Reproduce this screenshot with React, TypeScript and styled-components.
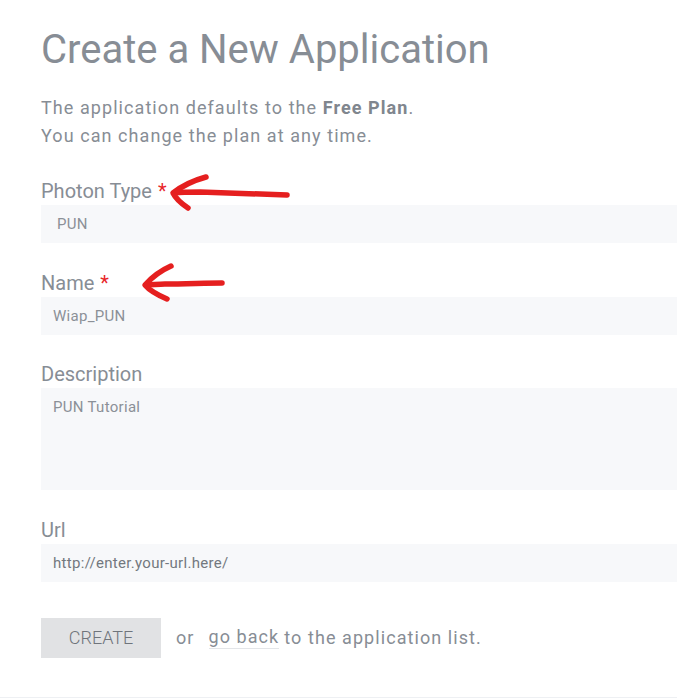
import React from "react";
import styled, { createGlobalStyle } from "styled-components";

const GlobalStyle = createGlobalStyle`
  html, body {
    margin: 0;
    padding: 0;
    background: #ffffff;
    overflow: hidden;
  }
  body {
    font-family: Roboto, "Liberation Sans", sans-serif;
    color: #868c95;
  }
  * { box-sizing: border-box; }
`;

const Page = styled.div`
  position: relative;
  width: 677px;
  height: 698px;
  overflow: hidden;
`;

const Content = styled.div`
  padding: 26px 0 0 41px;
  display: flex;
  flex-direction: column;
`;

const Title = styled.h1`
  margin: 0;
  font-size: 40px;
  line-height: 48px;
  font-weight: 400;
  color: #878d95;
`;

const Intro = styled.p`
  margin: 20px 0 0;
  font-size: 18px;
  line-height: 28px;
  letter-spacing: 1.07px;
  color: #878d95;

  strong {
    font-weight: 700;
    color: #80868e;
  }
`;

const Form = styled.form`
  margin-top: 29px;
  display: flex;
  flex-direction: column;
  gap: 27.5px;
`;

const Field = styled.div`
  display: flex;
  flex-direction: column;
  gap: 2px;
`;

const Label = styled.label`
  font-size: 20px;
  line-height: 24px;
  color: #878d95;
`;

const Required = styled.span`
  color: #e8262a;
  margin-left: 6px;
`;

const Input = styled.div<{ $pad?: number; $tall?: boolean; $dark?: boolean }>`
  width: 700px;
  height: ${(p) => (p.$tall ? "102px" : "38px")};
  background: #f7f8fa;
  padding: ${(p) => (p.$tall ? "9px" : "0")} ${(p) => p.$pad ?? 12}px 0;
  display: flex;
  align-items: ${(p) => (p.$tall ? "flex-start" : "center")};
  font-size: 15px;
  line-height: 20px;
  letter-spacing: 0.3px;
  color: ${(p) => (p.$dark ? "#73787f" : "#8b9097")};
`;

const Actions = styled.div`
  margin-top: 36px;
  display: flex;
  align-items: center;
  font-size: 18px;
  letter-spacing: 1.07px;
  color: #878d95;
`;

const Button = styled.button`
  width: 120px;
  height: 40px;
  border: none;
  background: #e1e2e4;
  color: #6f747b;
  font-family: Roboto, "Liberation Sans", sans-serif;
  font-size: 18px;
  font-weight: 300;
  letter-spacing: 0;
  padding: 0;
`;

const Or = styled.span`
  margin-left: 15px;
  margin-right: 14px;
`;

const BackLink = styled.a`
  color: #878d95;
  text-decoration: none;
  border-bottom: 1px solid #e3e5e8;
  line-height: 22px;
`;

const Rest = styled.span`
  margin-left: 5px;
`;

const Divider = styled.div`
  margin-top: 39px;
  height: 3px;
  background: #eef0f3;
`;

const Annotations = styled.svg`
  position: absolute;
  left: 0;
  top: 0;
  pointer-events: none;
`;

export default function App() {
  return (
    <Page>
      <GlobalStyle />
      <Content>
        <Title>Create a New Application</Title>
        <Intro>
          The application defaults to the <strong>Free Plan</strong>.
          <br />
          You can change the plan at any time.
        </Intro>
        <Form>
          <Field>
            <Label>
              Photon Type<Required>*</Required>
            </Label>
            <Input $pad={16}>PUN</Input>
          </Field>
          <Field>
            <Label>
              Name<Required>*</Required>
            </Label>
            <Input>Wiap_PUN</Input>
          </Field>
          <Field>
            <Label>Description</Label>
            <Input $tall>PUN Tutorial</Input>
          </Field>
          <Field>
            <Label>Url</Label>
            <Input $dark>http://enter.your-url.here/</Input>
          </Field>
        </Form>
        <Actions>
          <Button type="button">CREATE</Button>
          <Or>or</Or>
          <BackLink href="#">go back</BackLink>
          <Rest>to the application list.</Rest>
        </Actions>
      </Content>
      <Divider />
      <Annotations width="677" height="698" viewBox="0 0 677 698">
        <g
          fill="none"
          stroke="#e51f1f"
          strokeWidth="5.5"
          strokeLinecap="round"
          strokeLinejoin="round"
        >
          <path d="M287 195 C 260 194, 230 193, 200 192 C 190 192, 182 192, 174 193" />
          <path d="M206 177 C 195 180, 182 186, 173 193 C 176 199, 182 204, 188 208" />
          <path d="M222 283 C 205 283, 185 284, 165 284 C 158 284, 152 285, 146 285" />
          <path d="M171 266 C 162 270, 152 277, 145 285 C 150 291, 160 296, 167 299" />
        </g>
      </Annotations>
    </Page>
  );
}
